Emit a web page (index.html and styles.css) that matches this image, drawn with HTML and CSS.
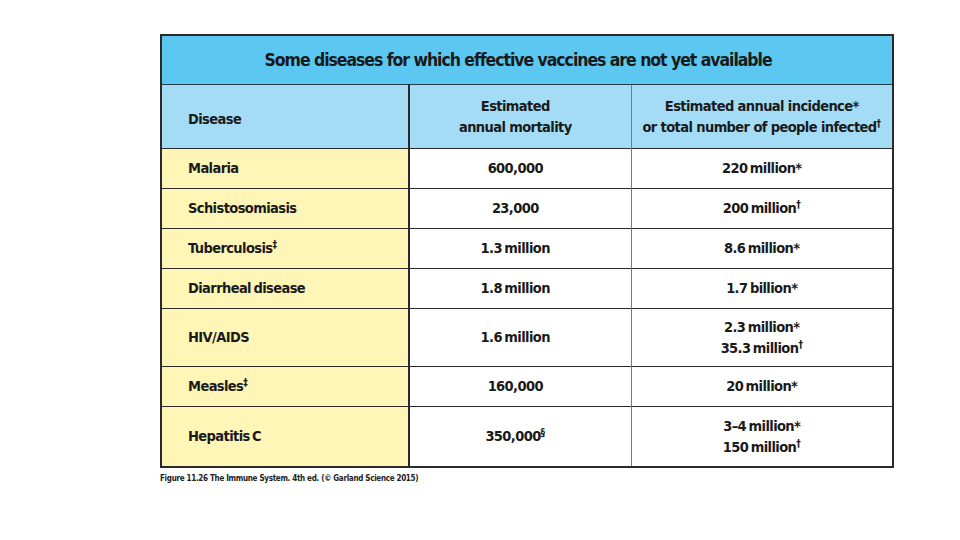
FILE: index.html
```html
<!DOCTYPE html>
<html>
<head>
<meta charset="utf-8">
<link rel="stylesheet" href="styles.css">
</head>
<body>
<div class="page">
  <div class="figure">
    <table class="vt">
      <colgroup>
        <col class="w1">
        <col class="w2">
        <col class="w3">
      </colgroup>
      <thead>
        <tr class="title-row"><th colspan="3">Some diseases for which effective vaccines are not yet available</th></tr>
        <tr class="head-row">
          <th class="c1">Disease</th>
          <th class="c2">Estimated<br>annual mortality</th>
          <th class="c3">Estimated annual incidence*<br>or total number of people infected<sup>†</sup></th>
        </tr>
      </thead>
      <tbody>
        <tr class="r40"><td class="c1">Malaria</td><td class="c2">600,000</td><td class="c3">220 million*</td></tr>
        <tr class="r40"><td class="c1">Schistosomiasis</td><td class="c2">23,000</td><td class="c3">200 million<sup>†</sup></td></tr>
        <tr class="r40"><td class="c1">Tuberculosis<sup>‡</sup></td><td class="c2">1.3 million</td><td class="c3">8.6 million*</td></tr>
        <tr class="r40"><td class="c1">Diarrheal disease</td><td class="c2">1.8 million</td><td class="c3">1.7 billion*</td></tr>
        <tr class="r58"><td class="c1">HIV/AIDS</td><td class="c2">1.6 million</td><td class="c3">2.3 million*<br>35.3 million<sup>†</sup></td></tr>
        <tr class="r40"><td class="c1">Measles<sup>‡</sup></td><td class="c2">160,000</td><td class="c3">20 million*</td></tr>
        <tr class="r60"><td class="c1">Hepatitis C</td><td class="c2">350,000<sup>§</sup></td><td class="c3">3–4 million*<br>150 million<sup>†</sup></td></tr>
      </tbody>
    </table>
    <p class="caption">Figure 11.26 The Immune System. 4th ed. (© Garland Science 2015)</p>
  </div>
</div>
</body>
</html>
```

FILE: styles.css
```css
html, body {
  margin: 0;
  padding: 0;
  background: #ffffff;
}
.page {
  width: 960px;
  height: 540px;
  padding: 34px 0 0 160px;
  box-sizing: border-box;
  font-family: "Liberation Sans Narrow", "DejaVu Sans Condensed", "Liberation Sans", sans-serif;
  font-weight: bold;
  color: #1a1a1a;
}
.figure {
  width: 732px;
}
.vt {
  width: 732px;
  border-collapse: collapse;
  table-layout: fixed;
  border: 2px solid #2a2a2a;
}
.w1 { width: 248px; }
.w2 { width: 222px; }
.w3 { width: 262px; }
.vt th, .vt td {
  padding: 0;
  vertical-align: middle;
  white-space: nowrap;
}
.title-row th {
  height: 48px;
  background: #5cc8f2;
  font-size: 17.5px;
  text-align: center;
  padding-right: 18px;
  border-bottom: 1.5px solid #2a3a48;
  letter-spacing: -1.05px;
}
.head-row th {
  height: 58px;
  background: #a4dcf6;
  font-size: 14.5px;
  line-height: 21px;
  letter-spacing: -0.6px;
  font-weight: bold;
}
.head-row th.c1 {
  padding-top: 5px;
}
.c1 {
  text-align: left;
  padding-left: 26px !important;
  border-right: 2px solid #2a2a2a;
}
.c2 {
  text-align: center;
  padding-right: 10px !important;
  border-right: 1.5px solid #7a7a7a;
}
.c3 {
  text-align: center;
}
.vt td {
  font-size: 14.5px;
  line-height: 21px;
  letter-spacing: -0.6px;
  word-spacing: -1.5px;
  border-top: 1.5px solid #2a2a2a;
}
.vt td.c1 {
  background: #fff5b6;
}
.vt td.c2, .vt td.c3 {
  background: #ffffff;
}
.r40 td { height: 39px; }
.r58 td { height: 57px; }
.r60 td { height: 59px; }
sup {
  font-size: 10px;
  line-height: 0;
  vertical-align: 5px;
  letter-spacing: 0;
}
.caption {
  margin: 6px 0 0 0;
  font-size: 8px;
  font-weight: bold;
  color: #222;
  letter-spacing: -0.3px;
}
```
